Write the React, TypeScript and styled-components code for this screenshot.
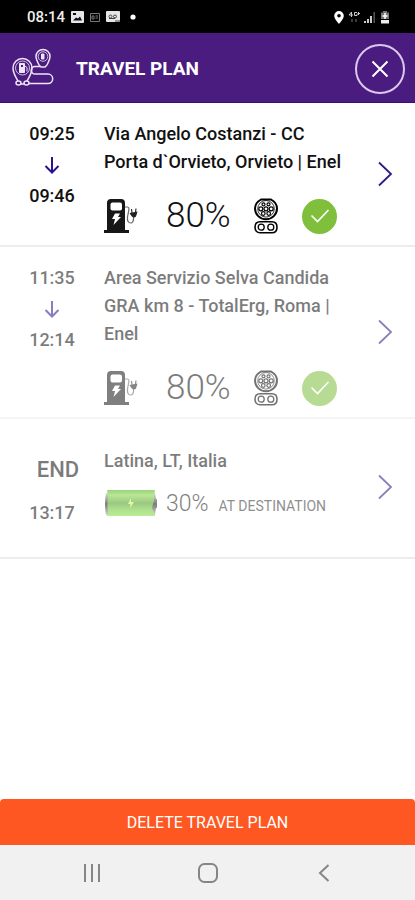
import React from "react";
import styled, { createGlobalStyle } from "styled-components";

const GlobalStyle = createGlobalStyle`
  * { box-sizing: border-box; }
  body { margin: 0; background: #fff; font-family: Roboto, "Liberation Sans", sans-serif; }
  button { font: inherit; border: 0; padding: 0; background: none; cursor: pointer; }
  svg { display: block; flex: none; }
`;

const Screen = styled.div`
  min-height: 100vh;
  display: flex;
  flex-direction: column;
`;

const StatusBar = styled.div`
  display: flex;
  align-items: center;
  justify-content: space-between;
  height: 33px;
  padding: 1px 25px 0 27px;
  background: #000;
  color: #eee;
`;

const StatusGroup = styled.div<{ $gap: number }>`
  display: flex;
  align-items: center;
  gap: ${(p) => p.$gap}px;
`;

const Clock = styled.span`
  font-size: 15px;
  font-weight: 500;
  line-height: 20px;
`;

const Header = styled.header`
  display: flex;
  align-items: center;
  height: 70px;
  padding: 2px 10px 0 12px;
  background: #4a1c80;
  border-bottom: 1px solid #35107a;
  color: #fff;
`;

const Title = styled.h1`
  flex: 1;
  margin: 0 0 0 22px;
  font-size: 19px;
  line-height: 24px;
  font-weight: 700;
`;

const CloseButton = styled.button`
  display: grid;
  place-items: center;
  width: 50px;
  height: 50px;
  border: 2px solid #dcc8ee;
  border-radius: 50%;
  color: #fff;
`;

const Stops = styled.ul`
  flex: 1;
  margin: 0;
  padding: 0;
  list-style: none;
`;

const Stop = styled.li<{ $muted?: boolean; $roomy?: boolean }>`
  display: flex;
  padding: ${(p) => (p.$roomy ? "28px 21px 30px 0" : "17px 21px 11px 0")};
  border-bottom: 2px solid ${(p) => (p.$muted && !p.$roomy ? "#f4f4f4" : "#ececec")};
  & > * { opacity: ${(p) => (p.$muted ? 0.55 : 1)}; }
`;

const Times = styled.div<{ $end?: boolean }>`
  display: flex;
  flex-direction: column;
  align-items: center;
  width: 104px;
  padding-top: ${(p) => (p.$end ? 9 : 0)}px;
  gap: ${(p) => (p.$end ? 15 : 7)}px;
  color: #111;
`;

const Time = styled.time`
  font-size: 18px;
  line-height: 28px;
  font-weight: 500;
`;

const EndLabel = styled.span`
  padding-left: 12px;
  font-size: 22px;
  line-height: 28px;
  font-weight: 500;
`;

const Details = styled.div`
  flex: 1;
  min-width: 0;
  color: #111;
`;

const Place = styled.h2`
  max-width: 246px;
  margin: 0;
  font-size: 18px;
  line-height: 28px;
  font-weight: 500;
`;

const ChargeInfo = styled.div`
  display: flex;
  align-items: center;
  height: 36px;
  margin-top: 22px;
`;

const Percent = styled.span`
  width: 88px;
  margin-left: 27px;
  font-size: 35px;
  line-height: 36px;
  font-weight: 300;
`;

const Available = styled.span`
  display: grid;
  place-items: center;
  width: 35px;
  height: 35px;
  margin-left: 24px;
  border-radius: 50%;
  background: #7fbf3b;
`;

const Arrival = styled.div`
  display: flex;
  align-items: center;
  height: 30px;
  margin-top: 14px;
`;

const Level = styled.span`
  margin: 0 10px 0 8px;
  font-size: 23px;
  line-height: 30px;
  font-weight: 300;
`;

const Note = styled.span`
  padding-top: 4px;
  font-size: 14px;
  line-height: 20px;
  color: #333;
`;

const OpenButton = styled.button<{ $raised?: boolean }>`
  align-self: center;
  margin-bottom: ${(p) => (p.$raised ? 6 : 0)}px;
  color: #2d1a87;
`;

const DeleteButton = styled.button`
  height: 46px;
  padding-top: 1px;
  border-radius: 4px 4px 0 0;
  background: #ff5722;
  color: #fff;
  font-size: 16px;
  line-height: 20px;
`;

const NavBar = styled.nav`
  display: grid;
  grid-template-columns: repeat(3, 116px);
  justify-content: center;
  height: 55px;
  background: #f1f1f1;
  color: #868686;
`;

const NavButton = styled.button`
  display: grid;
  place-items: center;
  color: inherit;
`;

const RouteIcon = () => (
  <svg width="42" height="42" viewBox="0 0 42 42" fill="none" stroke="#eee4f7" strokeWidth="1.5">
    <path d="M6 33 C3 28 1 25 1 20 A9.500 9.500 0 0 1 20 20 C20 25 18 28 15 33" />
    <circle cx="10.500" cy="20" r="7" strokeWidth="0.8" />
    <path d="M7.500 24.500V15.500h5v9z" fill="#eee4f7" strokeWidth="1" />
    <path d="M9 17h2v2H9z" fill="#4a1c80" stroke="none" />
    <path d="M13 18l2 1.500v4" strokeWidth="1" />
    <ellipse cx="6.500" cy="35" rx="2.500" ry="2" />
    <ellipse cx="14.500" cy="35" rx="2.500" ry="2" />
    <path d="M9 36h3" />
    <path d="M27 17 C25 13 24 11 24 8.500 A7 7 0 0 1 38 8.500 C38 11 37 13 35 17" />
    <circle cx="31" cy="8.500" r="4.800" strokeWidth="0.800" />
    <path d="M29.500 11V6h2.500v5z" fill="#eee4f7" strokeWidth="1" />
    <path d="M27 17l2 2h4l2-2" />
    <path d="M28 18.500h-5a3.800 3.800 0 0 0 0 7.600h13a4.700 4.700 0 0 1 0 9.400H17" />
  </svg>
);

const CloseIcon = () => (
  <svg width="18" height="18" viewBox="0 0 18 18" stroke="currentColor" strokeWidth="2">
    <path d="M1.500 1.500l15 15M16.500 1.500l-15 15" />
  </svg>
);

const DownArrow = () => (
  <svg width="16" height="20" viewBox="0 0 16 20" fill="none" stroke="#2b128f" strokeWidth="2">
    <path d="M8 2v15M1.500 11L8 17.500 14.500 11" />
  </svg>
);

const ChevronIcon = () => (
  <svg width="18" height="26" viewBox="0 0 18 26" fill="none" stroke="currentColor" strokeWidth="1.800">
    <path d="M3 1.500L15 13 3 24.500" />
  </svg>
);

const StationIcon = () => (
  <svg width="35" height="36" viewBox="0 0 35 36" fill="none">
    <path d="M3 32V5a4 4 0 0 1 4-4h10a4 4 0 0 1 4 4v27h4v3H0v-3z" fill="#171717" />
    <rect x="6.500" y="4.500" width="11.500" height="8" rx="2" fill="#fff" />
    <path d="M11 15.500h5l-2 3.500h3l-7.500 8 1.500-6H8z" fill="#fff" />
    <path d="M21 9h2.500q1.500 0 1.500 2l-1.500 8c-.5 4 1 6 3 6s3.500-2 3-6.500" stroke="#666" strokeWidth="1.200" />
    <path d="M25.500 15l8-1.500-1 3.500q-.5 2.500-2.500 2.500t-4.500-4.500z" fill="#222" />
    <path d="M28 15l-.5-4M31.500 14l.5-3.500" stroke="#333" strokeWidth="1.200" />
  </svg>
);

const ConnectorIcon = () => (
  <svg width="24" height="36" viewBox="0 0 24 36" fill="none" stroke="#000" strokeWidth="2">
    <path d="M7 1.500h10c3.500 2 6 5 6 9a11 10.800 0 0 1-22 0c0-4 2.500-7 6-9z" />
    <circle cx="12" cy="10.800" r="8.300" strokeWidth="0.800" />
    <g strokeWidth="1.200">
      <circle cx="9.500" cy="6.300" r="1.500" />
      <circle cx="14.500" cy="6.300" r="1.500" />
      <circle cx="6.800" cy="10.800" r="2" />
      <circle cx="12" cy="10.800" r="2" />
      <circle cx="17.200" cy="10.800" r="2" />
      <circle cx="9.300" cy="15.500" r="1.800" />
      <circle cx="14.700" cy="15.500" r="1.800" />
    </g>
    <path d="M6 23.800h12c3 0 5 2 5 5.400s-2 5.600-5 5.600H6c-3 0-5-2.200-5-5.600s2-5.400 5-5.400z" strokeWidth="1.600" />
    <circle cx="7.200" cy="29.200" r="3" strokeWidth="1.300" />
    <circle cx="16.800" cy="29.200" r="3" strokeWidth="1.300" />
  </svg>
);

const CheckIcon = () => (
  <svg width="20" height="16" viewBox="0 0 20 16" fill="none" stroke="#fff" strokeWidth="1.600">
    <path d="M1.500 7.500L7.500 13.500 18.500 2" />
  </svg>
);

const BatteryIcon = () => (
  <svg width="54" height="30" viewBox="0 0 54 30">
    <defs>
      <linearGradient id="charge" x1="0" y1="0" x2="0" y2="1">
        <stop offset="0" stopColor="#4fae10" />
        <stop offset="0.200" stopColor="#7fd63c" />
        <stop offset="0.500" stopColor="#4c9a1d" />
        <stop offset="0.750" stopColor="#69c92c" />
        <stop offset="1" stopColor="#84dd3f" />
      </linearGradient>
      <linearGradient id="shell" x1="0" y1="0" x2="0" y2="1">
        <stop offset="0" stopColor="#bbb" />
        <stop offset="0.500" stopColor="#111" />
        <stop offset="1" stopColor="#aaa" />
      </linearGradient>
    </defs>
    <path d="M2 4h49l1 6h1v9h-1l-1 7H2q-1-5-1-11t1-11z" fill="url(#shell)" />
    <path d="M3 1h48l-1 5q1 4-1 9t1 8l1 4H3l1-4q-1-8 0-16z" fill="url(#charge)" />
    <path d="M27 9l-3 6h2.500l-.5 4 4-6h-3z" fill="#c5f55c" />
  </svg>
);

const PictureIcon = () => (
  <svg width="13" height="12" viewBox="0 0 13 12">
    <rect width="13" height="12" rx="1" fill="#e6e6e6" />
    <path d="M2 9.500l3-3 2 1 2-2 2 4zM2 2h3v2H2z" fill="#111" />
  </svg>
);

const NewsIcon = () => (
  <svg width="10" height="9" viewBox="0 0 10 9" fill="none" stroke="#777">
    <path d="M.5.500h9v8h-9zM2 3h2v3H2zM5.500 3H8M5.500 5H8" />
  </svg>
);

const VoicemailIcon = () => (
  <svg width="15" height="12" viewBox="0 0 15 12">
    <rect width="14" height="11" rx="1" fill="#e6e6e6" />
    <path d="M3 5.500a1.500 1.500 0 1 0 3 0 1.500 1.500 0 1 0-3 0M7.500 5.500a1.500 1.500 0 1 0 3 0 1.500 1.500 0 1 0-3 0M3 7.500h6M9 10h5" fill="none" stroke="#444" />
  </svg>
);

const DotIcon = () => (
  <svg width="10" height="6" viewBox="0 0 10 6"><circle cx="6" cy="3" r="2.600" fill="#fff" /></svg>
);

const PinIcon = () => (
  <svg width="10" height="13" viewBox="0 0 10 13">
    <path d="M5 0a4.800 4.800 0 0 0-4.800 4.800C.2 8 5 13 5 13s4.800-5 4.800-8.200A4.800 4.800 0 0 0 5 0zm0 3a1.800 1.800 0 1 1 0 3.600A1.800 1.800 0 0 1 5 3z" fill="#fff" />
  </svg>
);

const NetworkIcon = () => (
  <svg width="12" height="12" viewBox="0 0 12 12" fill="none" stroke="#ccc">
    <path d="M3.500 6V1L1 4h4M9 1.500H6.500v3H9V3M10.500 1v3M9.500 2.500H12" />
    <path d="M4 8v3M8 8v3" stroke="#777" />
  </svg>
);

const SignalIcon = () => (
  <svg width="12" height="12" viewBox="0 0 12 12">
    <path d="M0 10h2v2H0zM3 8h2v4H3zM6 5h2v7H6z" fill="#ccc" />
    <path d="M9.500 1h1.500v11H9.500z" fill="#555" />
  </svg>
);

const BatterySaverIcon = () => (
  <svg width="10" height="13" viewBox="0 0 10 13">
    <path d="M3 0h4v1.500h2V8H1V1.500h2z" fill="#777" />
    <path d="M5 2v6M2.500 5h5" stroke="#fff" strokeWidth="1.500" />
    <path d="M1 9h8v3.500H1z" fill="#eee" />
  </svg>
);

const RecentsIcon = () => (
  <svg width="18" height="18" viewBox="0 0 18 18" stroke="currentColor" strokeWidth="2">
    <path d="M2 0v18M9 0v18M16 0v18" />
  </svg>
);

const HomeIcon = () => (
  <svg width="20" height="20" viewBox="0 0 20 20" fill="none" stroke="currentColor" strokeWidth="2">
    <rect x="1" y="1" width="18" height="18" rx="5.500" />
  </svg>
);

const BackIcon = () => (
  <svg width="12" height="18" viewBox="0 0 12 18" fill="none" stroke="currentColor" strokeWidth="2">
    <path d="M10.500 1L2 9l8.500 8" />
  </svg>
);

interface ChargeStop {
  arrive: string;
  leave: string;
  place: string;
  percent: string;
  muted?: boolean;
}

const stops: ChargeStop[] = [
  { arrive: "09:25", leave: "09:46", place: "Via Angelo Costanzi - CC Porta d`Orvieto, Orvieto | Enel", percent: "80%" },
  { arrive: "11:35", leave: "12:14", place: "Area Servizio Selva Candida GRA km 8 - TotalErg, Roma | Enel", percent: "80%", muted: true },
];

export default function App() {
  return (
    <Screen>
      <GlobalStyle />
      <StatusBar>
        <StatusGroup $gap={6}>
          <Clock>08:14</Clock>
          <PictureIcon />
          <NewsIcon />
          <VoicemailIcon />
          <DotIcon />
        </StatusGroup>
        <StatusGroup $gap={4}>
          <PinIcon />
          <NetworkIcon />
          <SignalIcon />
          <BatterySaverIcon />
        </StatusGroup>
      </StatusBar>
      <Header>
        <RouteIcon />
        <Title>TRAVEL PLAN</Title>
        <CloseButton aria-label="Close"><CloseIcon /></CloseButton>
      </Header>
      <Stops>
        {stops.map((stop) => (
          <Stop key={stop.arrive} $muted={stop.muted}>
            <Times>
              <Time>{stop.arrive}</Time>
              <DownArrow />
              <Time>{stop.leave}</Time>
            </Times>
            <Details>
              <Place>{stop.place}</Place>
              <ChargeInfo>
                <StationIcon />
                <Percent>{stop.percent}</Percent>
                <ConnectorIcon />
                <Available><CheckIcon /></Available>
              </ChargeInfo>
            </Details>
            <OpenButton $raised aria-label={`Open ${stop.place}`}><ChevronIcon /></OpenButton>
          </Stop>
        ))}
        <Stop $muted $roomy>
          <Times $end>
            <EndLabel>END</EndLabel>
            <Time>13:17</Time>
          </Times>
          <Details>
            <Place>Latina, LT, Italia</Place>
            <Arrival>
              <BatteryIcon />
              <Level>30%</Level>
              <Note>AT DESTINATION</Note>
            </Arrival>
          </Details>
          <OpenButton aria-label="Open Latina, LT, Italia"><ChevronIcon /></OpenButton>
        </Stop>
      </Stops>
      <DeleteButton>DELETE TRAVEL PLAN</DeleteButton>
      <NavBar>
        <NavButton aria-label="Recent apps"><RecentsIcon /></NavButton>
        <NavButton aria-label="Home"><HomeIcon /></NavButton>
        <NavButton aria-label="Back"><BackIcon /></NavButton>
      </NavBar>
    </Screen>
  );
}
